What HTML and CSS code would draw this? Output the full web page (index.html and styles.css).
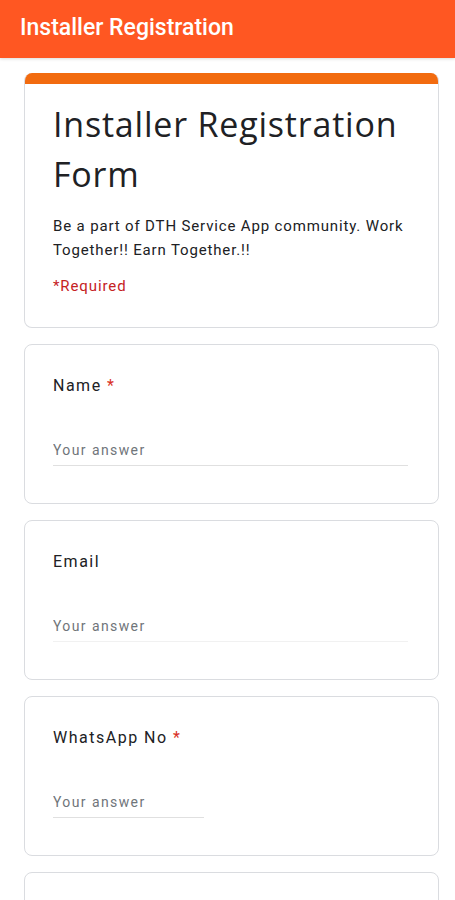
FILE: index.html
```html
<!DOCTYPE html>
<html lang="en">
<head>
    <meta charset="UTF-8">
    <title>Installer Registration</title>
    <link rel="stylesheet" href="styles.css">
</head>
<body>
    <header class="app-bar">Installer Registration</header>
    <main class="form-list">
        <section class="card card-head">
            <div class="card-band"></div>
            <div class="head-body">
                <h1>Installer Registration Form</h1>
                <p class="desc">Be a part of DTH Service App community. Work Together!! Earn Together.!!</p>
                <p class="req-note">*Required</p>
            </div>
        </section>
        <section class="card question">
            <label>Name <span class="star">*</span></label>
            <input type="text" class="answer long" placeholder="Your answer">
        </section>
        <section class="card question">
            <label>Email</label>
            <input type="email" class="answer long faint" placeholder="Your answer">
        </section>
        <section class="card question">
            <label>WhatsApp No <span class="star">*</span></label>
            <input type="tel" class="answer short" placeholder="Your answer">
        </section>
        <section class="card question"></section>
    </main>
</body>
</html>
```
FILE: styles.css
```css
body {
    margin: 0;
    font-family: Roboto, Arial, sans-serif;
    background: #fff;
    color: #202124;
}
.app-bar {
    height: 58px;
    background: #ff5722;
    color: #fff;
    font-size: 23px;
    font-weight: 500;
    display: flex;
    align-items: center;
    padding-left: 20px;
    padding-bottom: 3px;
    box-sizing: border-box;
    box-shadow: 0 1px 3px rgba(0,0,0,0.15);
}
.form-list {
    display: flex;
    flex-direction: column;
    gap: 16px;
    padding: 15px 16px 0 24px;
}
.card {
    background: #fff;
    border: 1px solid #dadce0;
    border-radius: 8px;
    overflow: hidden;
}
.card-head {
    border-top: none;
}
.card-band {
    height: 11px;
    background: #f26b0f;
}
.head-body {
    padding: 15px 18px 29px 28px;
}
h1 {
    margin: 0;
    font-family: "Open Sans", Roboto, sans-serif;
    font-weight: 400;
    font-size: 34px;
    line-height: 50px;
    letter-spacing: 0.8px;
    color: #202124;
}
.desc {
    margin: 15px 0 0;
    font-size: 15px;
    line-height: 24px;
    letter-spacing: 0.85px;
    color: #202124;
}
.req-note {
    margin: 12px 0 0;
    font-size: 15px;
    line-height: 24px;
    letter-spacing: 0.9px;
    color: #c5221f;
}
.question {
    height: 160px;
    box-sizing: border-box;
    padding: 29px 28px 0 28px;
    display: flex;
    flex-direction: column;
}
.question label {
    font-size: 16px;
    line-height: 24px;
    letter-spacing: 1.5px;
    color: #202124;
}
.star {
    color: #d93025;
}
.answer {
    margin-top: 42px;
    border: none;
    border-bottom: 1px solid #e0e0e0;
    padding: 0 0 5px;
    font-family: Roboto, Arial, sans-serif;
    font-size: 14px;
    line-height: 20px;
    letter-spacing: 1.4px;
    outline: none;
}
.answer::placeholder {
    color: #70757a;
}
.long {
    width: 355px;
}
.short {
    width: 151px;
}
.faint {
    border-bottom-color: #f1f1f1;
}
```
